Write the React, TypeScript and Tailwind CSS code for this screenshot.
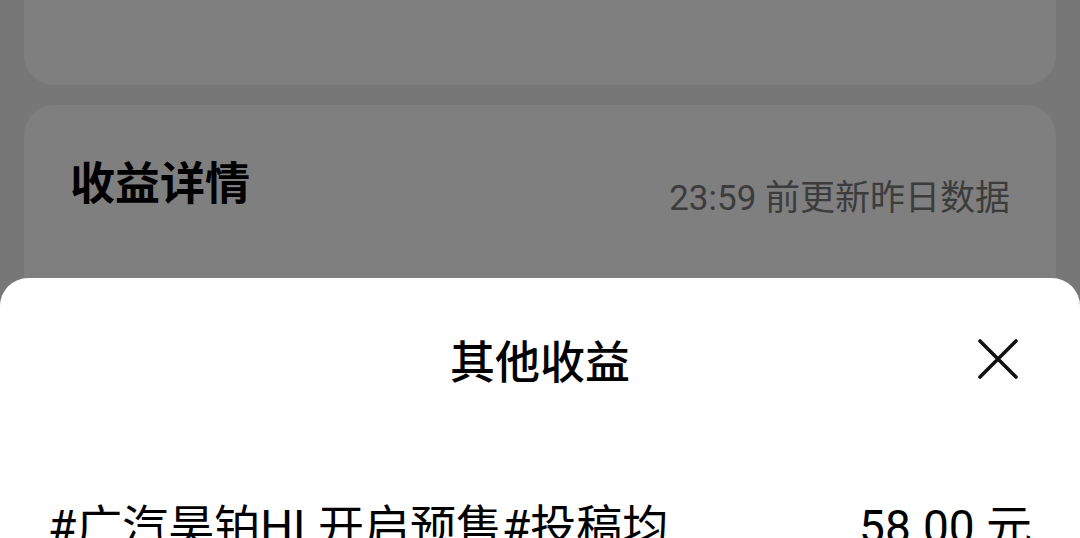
import React from "react";

const font = "font-['Roboto','Noto_Sans_CJK_SC',sans-serif]";

const App: React.FC = () => {
  return (
    <div className={`relative h-[538px] w-[1080px] overflow-hidden bg-[#777777] ${font}`}>
      {/* dimmed page behind the sheet */}
      <div className="flex flex-col gap-[20px] px-[24px]">
        <div className="h-[85px] rounded-b-[30px] bg-[#7f7f7f]"></div>
        <div className="h-[400px] rounded-[30px] bg-[#7f7f7f] px-[46px]">
          <div className="flex items-start justify-between pt-[52px]">
            <h2 className="text-[45px] font-bold leading-[56px] text-black">收益详情</h2>
            <span className="mt-[14px] text-[35px] leading-[56px] text-[#3c3c3c]">23:59 前更新昨日数据</span>
          </div>
        </div>
      </div>

      {/* bottom sheet */}
      <div className="absolute inset-x-0 top-[278px] bottom-0 rounded-t-[28px] bg-white">
        <div className="relative flex h-[174px] items-center justify-center pb-[2px]">
          <h3 className="text-[45px] font-medium leading-[56px] text-black">其他收益</h3>
          <button className="absolute right-[60px] top-[59px] flex h-[44px] w-[44px] items-center justify-center" aria-label="关闭">
            <svg width="40" height="40" viewBox="0 0 40 40" fill="none" stroke="#111111" strokeWidth="3.6" strokeLinecap="round">
              <path d="M2 2 L38 38 M38 2 L2 38" />
            </svg>
          </button>
        </div>
        <div className="flex items-start justify-between px-[48px] pt-[44px]">
          <p className="w-[650px] text-[46px] leading-[62px] text-black">#广汽昊铂HL开启预售#投稿均分计划</p>
          <span className="shrink-0 text-[46px] leading-[62px] text-black">58.00 元</span>
        </div>
      </div>
    </div>
  );
};

export default App;
